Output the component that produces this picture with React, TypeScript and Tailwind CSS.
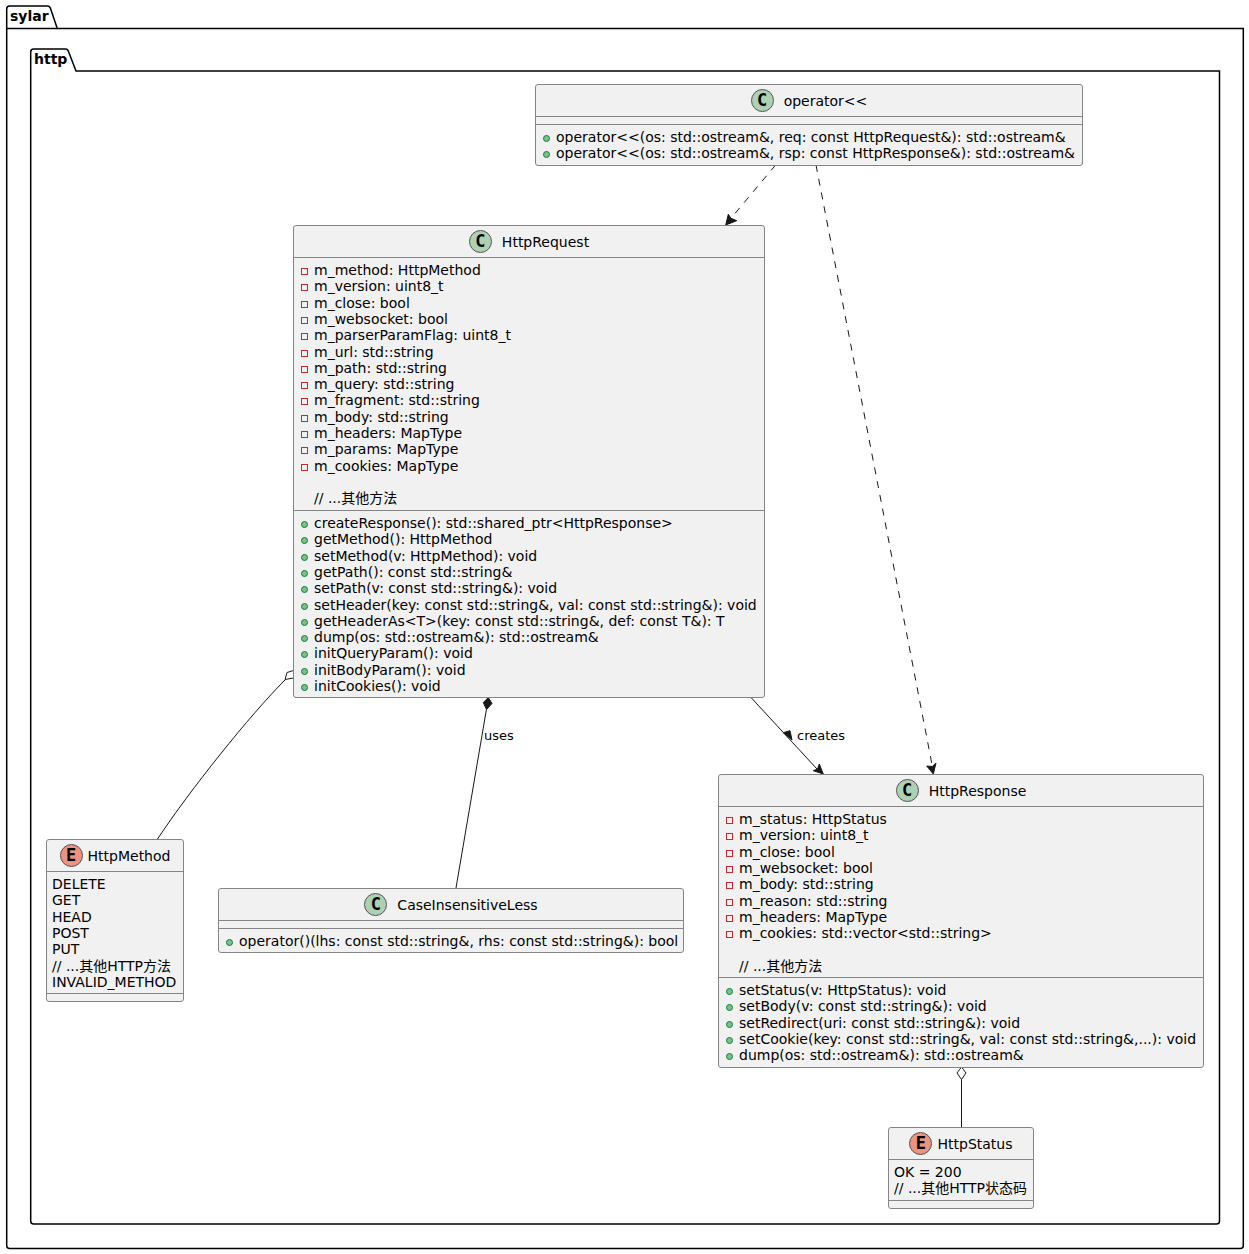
const FONT = { fontFamily: '"DejaVu Sans", "Noto Sans CJK SC", sans-serif' };

type Row = { vis?: '+' | '-'; text: string };
type Box = {
  name: string;
  kind: 'C' | 'E';
  left: number;
  top: number;
  width: number;
  sections: Row[][];
};

const m = (text: string): Row => ({ vis: '-', text });
const p = (text: string): Row => ({ vis: '+', text });
const blank: Row = { text: '\u00a0' };

const boxes: Box[] = [
  {
    name: 'operator<<',
    kind: 'C',
    left: 535,
    top: 84,
    width: 548,
    sections: [
      [],
      [
        p('operator<<(os: std::ostream&, req: const HttpRequest&): std::ostream&'),
        p('operator<<(os: std::ostream&, rsp: const HttpResponse&): std::ostream&'),
      ],
    ],
  },
  {
    name: 'HttpRequest',
    kind: 'C',
    left: 293,
    top: 225,
    width: 472,
    sections: [
      [
        m('m_method: HttpMethod'),
        m('m_version: uint8_t'),
        m('m_close: bool'),
        m('m_websocket: bool'),
        m('m_parserParamFlag: uint8_t'),
        m('m_url: std::string'),
        m('m_path: std::string'),
        m('m_query: std::string'),
        m('m_fragment: std::string'),
        m('m_body: std::string'),
        m('m_headers: MapType'),
        m('m_params: MapType'),
        m('m_cookies: MapType'),
        blank,
        { text: '// ...其他方法' },
      ],
      [
        p('createResponse(): std::shared_ptr<HttpResponse>'),
        p('getMethod(): HttpMethod'),
        p('setMethod(v: HttpMethod): void'),
        p('getPath(): const std::string&'),
        p('setPath(v: const std::string&): void'),
        p('setHeader(key: const std::string&, val: const std::string&): void'),
        p('getHeaderAs<T>(key: const std::string&, def: const T&): T'),
        p('dump(os: std::ostream&): std::ostream&'),
        p('initQueryParam(): void'),
        p('initBodyParam(): void'),
        p('initCookies(): void'),
      ],
    ],
  },
  {
    name: 'HttpResponse',
    kind: 'C',
    left: 718,
    top: 774,
    width: 486,
    sections: [
      [
        m('m_status: HttpStatus'),
        m('m_version: uint8_t'),
        m('m_close: bool'),
        m('m_websocket: bool'),
        m('m_body: std::string'),
        m('m_reason: std::string'),
        m('m_headers: MapType'),
        m('m_cookies: std::vector<std::string>'),
        blank,
        { text: '// ...其他方法' },
      ],
      [
        p('setStatus(v: HttpStatus): void'),
        p('setBody(v: const std::string&): void'),
        p('setRedirect(uri: const std::string&): void'),
        p('setCookie(key: const std::string&, val: const std::string&,...): void'),
        p('dump(os: std::ostream&): std::ostream&'),
      ],
    ],
  },
  {
    name: 'CaseInsensitiveLess',
    kind: 'C',
    left: 218,
    top: 888,
    width: 466,
    sections: [[], [p('operator()(lhs: const std::string&, rhs: const std::string&): bool')]],
  },
  {
    name: 'HttpMethod',
    kind: 'E',
    left: 46,
    top: 839,
    width: 138,
    sections: [
      [
        { text: 'DELETE' },
        { text: 'GET' },
        { text: 'HEAD' },
        { text: 'POST' },
        { text: 'PUT' },
        { text: '// ...其他HTTP方法' },
        { text: 'INVALID_METHOD' },
      ],
      [],
    ],
  },
  {
    name: 'HttpStatus',
    kind: 'E',
    left: 888,
    top: 1127,
    width: 146,
    sections: [[{ text: 'OK = 200' }, { text: '// ...其他HTTP状态码' }], []],
  },
];

// rows are 16.3px apart in the picture; whole pixels keep the markers crisp
const rowHeight = (j: number) => Math.round((j + 1) * 16.3) - Math.round(j * 16.3);

const Badge = ({ kind }: { kind: 'C' | 'E' }) => (
  <span
    className={`flex h-[23px] w-[23px] shrink-0 items-center justify-center rounded-full border border-[#555] text-[17px] font-bold leading-none text-black ${
      kind === 'C' ? 'bg-[#ADD1B2]' : 'bg-[#EB937F]'
    }`}
    style={{ fontFamily: '"DejaVu Sans Mono", monospace' }}
  >
    {kind}
  </span>
);

const Marker = ({ vis }: { vis: '+' | '-' }) => (
  <svg width={7} height={7} className="mt-[6px] shrink-0">
    {vis === '+' ? (
      <circle cx={3.5} cy={3.5} r={3} fill="#84BE84" stroke="#038048" strokeWidth={1} />
    ) : (
      <rect x={0.5} y={0.5} width={6} height={6} fill="none" stroke="#C82930" strokeWidth={1} />
    )}
  </svg>
);

const ClassBox = ({ box }: { box: Box }) => (
  <div
    className="absolute rounded-[3px] border border-[#858585] bg-[#F1F1F1] text-[14px] leading-[16px] text-black"
    style={{ left: box.left, top: box.top, width: box.width }}
  >
    <div className={`flex h-[31px] items-center justify-center ${box.kind === 'C' ? 'gap-[10px]' : 'gap-[5px]'}`}>
      <Badge kind={box.kind} />
      <span>{box.name}</span>
    </div>
    {box.sections.map((rows, i) => (
      <div key={i} className={`border-t border-[#858585] ${rows.length ? 'pb-[3px] pt-[4px]' : 'h-[8px]'}`}>
        {rows.map((row, j) => (
          <div
            key={j}
            className={`flex items-start whitespace-nowrap ${box.kind === 'E' ? 'pl-[5px]' : 'pl-[7px]'}`}
            style={{ height: rowHeight(j) }}
          >
            {box.kind === 'C' && <span className="flex w-[13px] shrink-0">{row.vis && <Marker vis={row.vis} />}</span>}
            <span>{row.text}</span>
          </div>
        ))}
      </div>
    ))}
  </div>
);

// packages and relation lines are a drawing, so they live in one svg
const Edges = () => (
  <svg className="absolute left-0 top-0" width={1249} height={1254} fill="none">
    <g stroke="#000" strokeWidth={1.5}>
      <path d="M6.7 28.5 V9 Q6.7 6 9.7 6 H47.5 Q49.7 6 50.5 8.5 L57.3 28.5 H1243.3 V1245.5 Q1243.3 1248.5 1240.3 1248.5 H9.7 Q6.7 1248.5 6.7 1245.5 Z" />
      <path d="M6.7 28.5 H57.3" />
      <path d="M30.7 71 V52 Q30.7 49 33.7 49 H65.5 Q67.7 49 68.5 51.5 L76 71 H1219.5 V1221 Q1219.5 1224 1216.5 1224 H33.7 Q30.7 1224 30.7 1221 Z" />
    </g>
    <g stroke="#181818" strokeWidth={1}>
      <path d="M775.6 165 L731 218.3" strokeDasharray="7 7" />
      <path d="M816 165 L932.3 766" strokeDasharray="7 7" />
      <path d="M751 697.5 L817 769" />
      <path d="M486.5 709 L456 888" />
      <path d="M961.5 1079.5 V1127" />
      <path d="M285 680 C 250 715 190 790 157.3 839.3" />
    </g>
    <g fill="#181818" stroke="#181818" strokeWidth={1} strokeLinejoin="miter">
      <path d="M725.7 225 L736.7 220.7 L731 218.3 L728.3 214.3 Z" />
      <path d="M933.3 774 L936 763 L932.3 766.5 L926.7 766 Z" />
      <path d="M823.3 774 L819.3 764 L817.5 769 L813.3 770.7 Z" />
      <path d="M488.3 697.5 L492 703.5 L486.5 709.5 L483.3 702.5 Z" />
      <path d="M783.3 732.7 L790 730.7 L792 740 Z" />
    </g>
    <g fill="#fff" stroke="#181818" strokeWidth={1}>
      <path d="M961.5 1067 L966 1073 L961.5 1079.5 L957 1073 Z" />
      <path d="M293.5 670.5 L293.5 678 L285 679.5 L287 672.5 Z" />
    </g>
  </svg>
);

export default function App() {
  return (
    <div className="relative h-[1254px] w-[1249px] overflow-hidden bg-white" style={FONT}>
      <Edges />
      <span className="absolute left-[10px] top-[8px] text-[14px] font-bold leading-[16px] text-black">sylar</span>
      <span className="absolute left-[34px] top-[51px] text-[14px] font-bold leading-[16px] text-black">http</span>
      {boxes.map((box) => (
        <ClassBox key={box.name} box={box} />
      ))}
      <span className="absolute left-[484px] top-[728px] text-[13px] leading-[15px] text-black">uses</span>
      <span className="absolute left-[797px] top-[728px] text-[13px] leading-[15px] text-black">creates</span>
    </div>
  );
}
